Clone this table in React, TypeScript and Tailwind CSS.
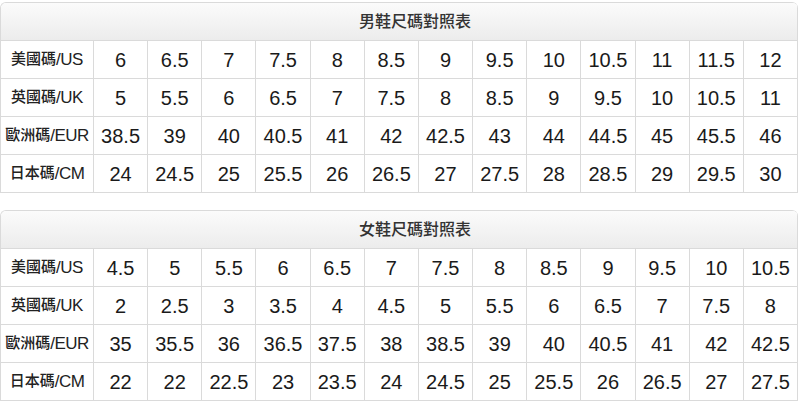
import React from "react";

interface SizeTable {
  title: string;
  rows: { label: string; values: string[] }[];
}

const tables: SizeTable[] = [
  {
    title: "男鞋尺碼對照表",
    rows: [
      { label: "美國碼/US", values: ["6", "6.5", "7", "7.5", "8", "8.5", "9", "9.5", "10", "10.5", "11", "11.5", "12"] },
      { label: "英國碼/UK", values: ["5", "5.5", "6", "6.5", "7", "7.5", "8", "8.5", "9", "9.5", "10", "10.5", "11"] },
      { label: "歐洲碼/EUR", values: ["38.5", "39", "40", "40.5", "41", "42", "42.5", "43", "44", "44.5", "45", "45.5", "46"] },
      { label: "日本碼/CM", values: ["24", "24.5", "25", "25.5", "26", "26.5", "27", "27.5", "28", "28.5", "29", "29.5", "30"] },
    ],
  },
  {
    title: "女鞋尺碼對照表",
    rows: [
      { label: "美國碼/US", values: ["4.5", "5", "5.5", "6", "6.5", "7", "7.5", "8", "8.5", "9", "9.5", "10", "10.5"] },
      { label: "英國碼/UK", values: ["2", "2.5", "3", "3.5", "4", "4.5", "5", "5.5", "6", "6.5", "7", "7.5", "8"] },
      { label: "歐洲碼/EUR", values: ["35", "35.5", "36", "36.5", "37.5", "38", "38.5", "39", "40", "40.5", "41", "42", "42.5"] },
      { label: "日本碼/CM", values: ["22", "22", "22.5", "23", "23.5", "24", "24.5", "25", "25.5", "26", "26.5", "27", "27.5"] },
    ],
  },
];

function Label({ text }: { text: string }) {
  const [cjk, latin] = text.split("/");
  return (
    <div className="flex items-center justify-center whitespace-nowrap border-b border-r border-[#dadada] text-[#222]">
      <span className="text-[15px] font-medium">{cjk}</span>
      <span className="text-[17px] tracking-[-0.5px]">/{latin}</span>
    </div>
  );
}

function Table({ table }: { table: SizeTable }) {
  return (
    <div className="w-[798px] overflow-hidden rounded-t-[6px] border-l border-t border-[#dadada]">
      <div className="flex h-[38px] items-center justify-center border-b border-r border-[#dadada] bg-gradient-to-b from-[#fbfbfb] to-[#ececec] pl-[32px] text-[16px] font-medium text-[#333]">
        {table.title}
      </div>
      {table.rows.map((row) => (
        <div key={row.label} className="grid h-[38px] grid-cols-[93px_repeat(13,1fr)]">
          <Label text={row.label} />
          {row.values.map((v, i) => (
            <div
              key={i}
              className="flex items-center justify-center border-b border-r border-[#dadada] text-[20px] text-[#1a1a1a]"
            >
              {v}
            </div>
          ))}
        </div>
      ))}
    </div>
  );
}

export default function App() {
  return (
    <div
      className="h-[404px] w-[800px] overflow-hidden bg-white pt-[2px]"
      style={{ fontFamily: '"Liberation Sans", "Noto Sans CJK TC", sans-serif' }}
    >
      <Table table={tables[0]} />
      <div className="h-[17px]" />
      <Table table={tables[1]} />
    </div>
  );
}
